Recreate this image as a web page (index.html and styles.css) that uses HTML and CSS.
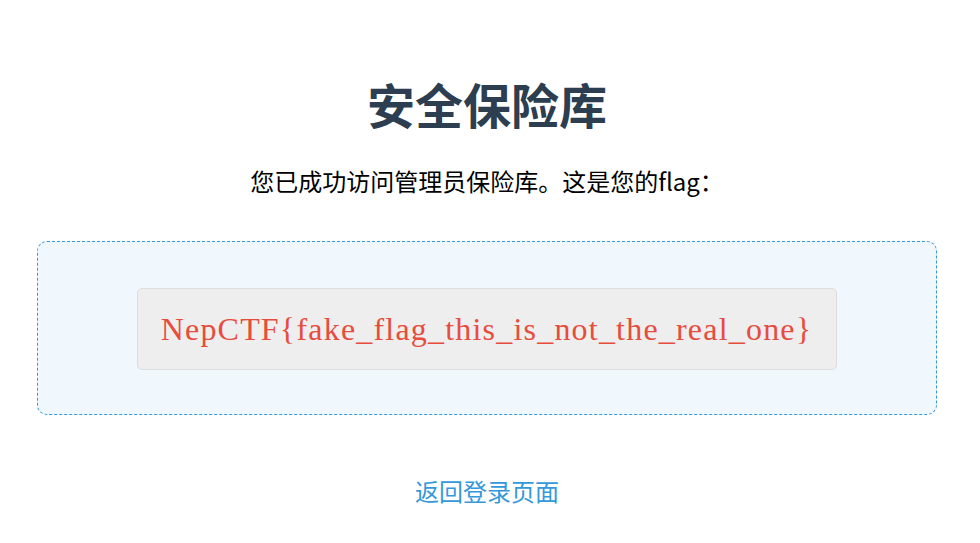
FILE: index.html
```html
<!DOCTYPE html>
<html lang="zh-CN">
<head>
<meta charset="utf-8">
<title>安全保险库</title>
<link rel="stylesheet" href="styles.css">
</head>
<body>
<main class="page">
  <h1 class="title">安全保险库</h1>
  <p class="subtitle">您已成功访问管理员保险库。这是您的flag：</p>
  <section class="vault">
    <div class="flag">NepCTF{fake_flag_this_is_not_the_real_one}</div>
  </section>
  <a class="back" href="#">返回登录页面</a>
</main>
</body>
</html>
```
FILE: styles.css
```css
html, body {
  margin: 0;
  background: #ffffff;
}
body {
  padding: 0 6px 0 0;
  font-family: "Noto Sans CJK SC", "Noto Sans", sans-serif;
  color: #000000;
}
.page {
  width: 900px;
  margin: 0 auto;
  display: flex;
  flex-direction: column;
  align-items: center;
  text-align: center;
}
.title {
  margin: 74px 0 0;
  font-size: 48px;
  line-height: 58px;
  font-weight: 700;
  color: #2c3e50;
}
.subtitle {
  margin: 32px 0 0;
  font-size: 24px;
  line-height: 34px;
}
.vault {
  box-sizing: border-box;
  width: 900px;
  margin-top: 43px;
  padding: 46px 0 44px;
  border: 1px dashed #3498db;
  border-radius: 10px;
  background: #f0f7fd;
  display: flex;
  justify-content: center;
}
.flag {
  padding: 20px 24px 20px 23px;
  border: 1px solid #dddddd;
  border-radius: 5px;
  background: #eeeeee;
  color: #e74c3c;
  font-family: "Liberation Serif", serif;
  font-size: 32px;
  line-height: 40px;
  letter-spacing: 1.2px;
  white-space: nowrap;
}
.back {
  margin-top: 59px;
  font-size: 24px;
  line-height: 34px;
  color: #3498db;
  text-decoration: none;
}
```
